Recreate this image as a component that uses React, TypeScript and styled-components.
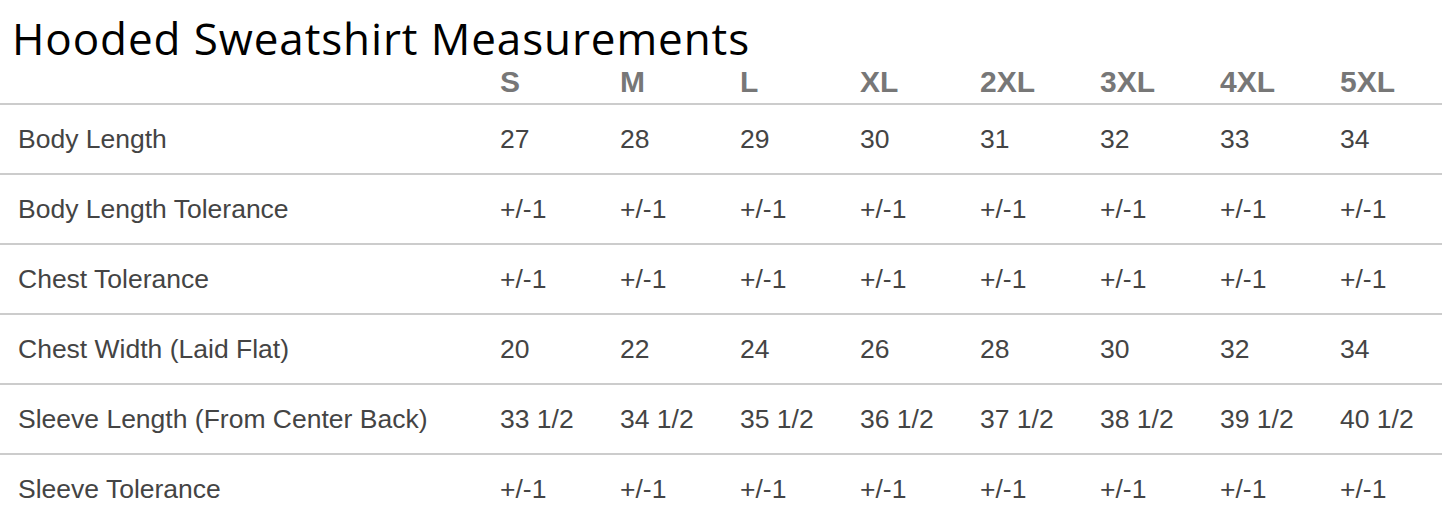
import styled, { createGlobalStyle } from 'styled-components';

const GlobalStyle = createGlobalStyle`
  body {
    margin: 0;
    background: #ffffff;
  }
`;

const StyledPage = styled.div`
  width: 1445px;
  overflow: hidden;
`;

const StyledTitle = styled.h1`
  margin: 0;
  height: 60px;
  padding: 13px 0 0 12px;
  box-sizing: border-box;
  font-family: 'Open Sans', sans-serif;
  font-weight: 400;
  font-size: 44px;
  line-height: 50px;
  letter-spacing: 0.9px;
  color: #000;
  white-space: nowrap;
`;

const StyledTable = styled.div`
  width: 1442px;
  display: grid;
  grid-template-columns: 490px repeat(7, 120px) 1fr;
  font-family: 'Liberation Sans', Arial, sans-serif;
`;

const StyledRow = styled.div<{ $head?: boolean }>`
  display: contents;

  & > div {
    height: ${(p) => (p.$head ? '43px' : '68px')};
    line-height: ${(p) => (p.$head ? '43px' : '68px')};
    border-bottom: 2px solid #cccccc;
    font-size: ${(p) => (p.$head ? '30px' : '26.5px')};
    font-weight: ${(p) => (p.$head ? 700 : 400)};
    color: ${(p) => (p.$head ? '#777777' : '#444444')};
    white-space: nowrap;
  }
`;

const StyledLabel = styled.div`
  padding-left: 18px;
`;

const StyledCell = styled.div`
  padding-left: 10px;
`;

const sizes = ['S', 'M', 'L', 'XL', '2XL', '3XL', '4XL', '5XL'];

const rows: [string, string[]][] = [
  ['Body Length', ['27', '28', '29', '30', '31', '32', '33', '34']],
  ['Body Length Tolerance', Array(8).fill('+/-1')],
  ['Chest Tolerance', Array(8).fill('+/-1')],
  ['Chest Width (Laid Flat)', ['20', '22', '24', '26', '28', '30', '32', '34']],
  [
    'Sleeve Length (From Center Back)',
    ['33 1/2', '34 1/2', '35 1/2', '36 1/2', '37 1/2', '38 1/2', '39 1/2', '40 1/2'],
  ],
  ['Sleeve Tolerance', Array(8).fill('+/-1')],
];

export default function App() {
  return (
    <StyledPage>
      <GlobalStyle />
      <StyledTitle>Hooded Sweatshirt Measurements</StyledTitle>
      <StyledTable>
        <StyledRow $head>
          <StyledLabel />
          {sizes.map((s) => (
            <StyledCell key={s}>{s}</StyledCell>
          ))}
        </StyledRow>
        {rows.map(([label, values]) => (
          <StyledRow key={label}>
            <StyledLabel>{label}</StyledLabel>
            {values.map((v, i) => (
              <StyledCell key={sizes[i]}>{v}</StyledCell>
            ))}
          </StyledRow>
        ))}
      </StyledTable>
    </StyledPage>
  );
}
